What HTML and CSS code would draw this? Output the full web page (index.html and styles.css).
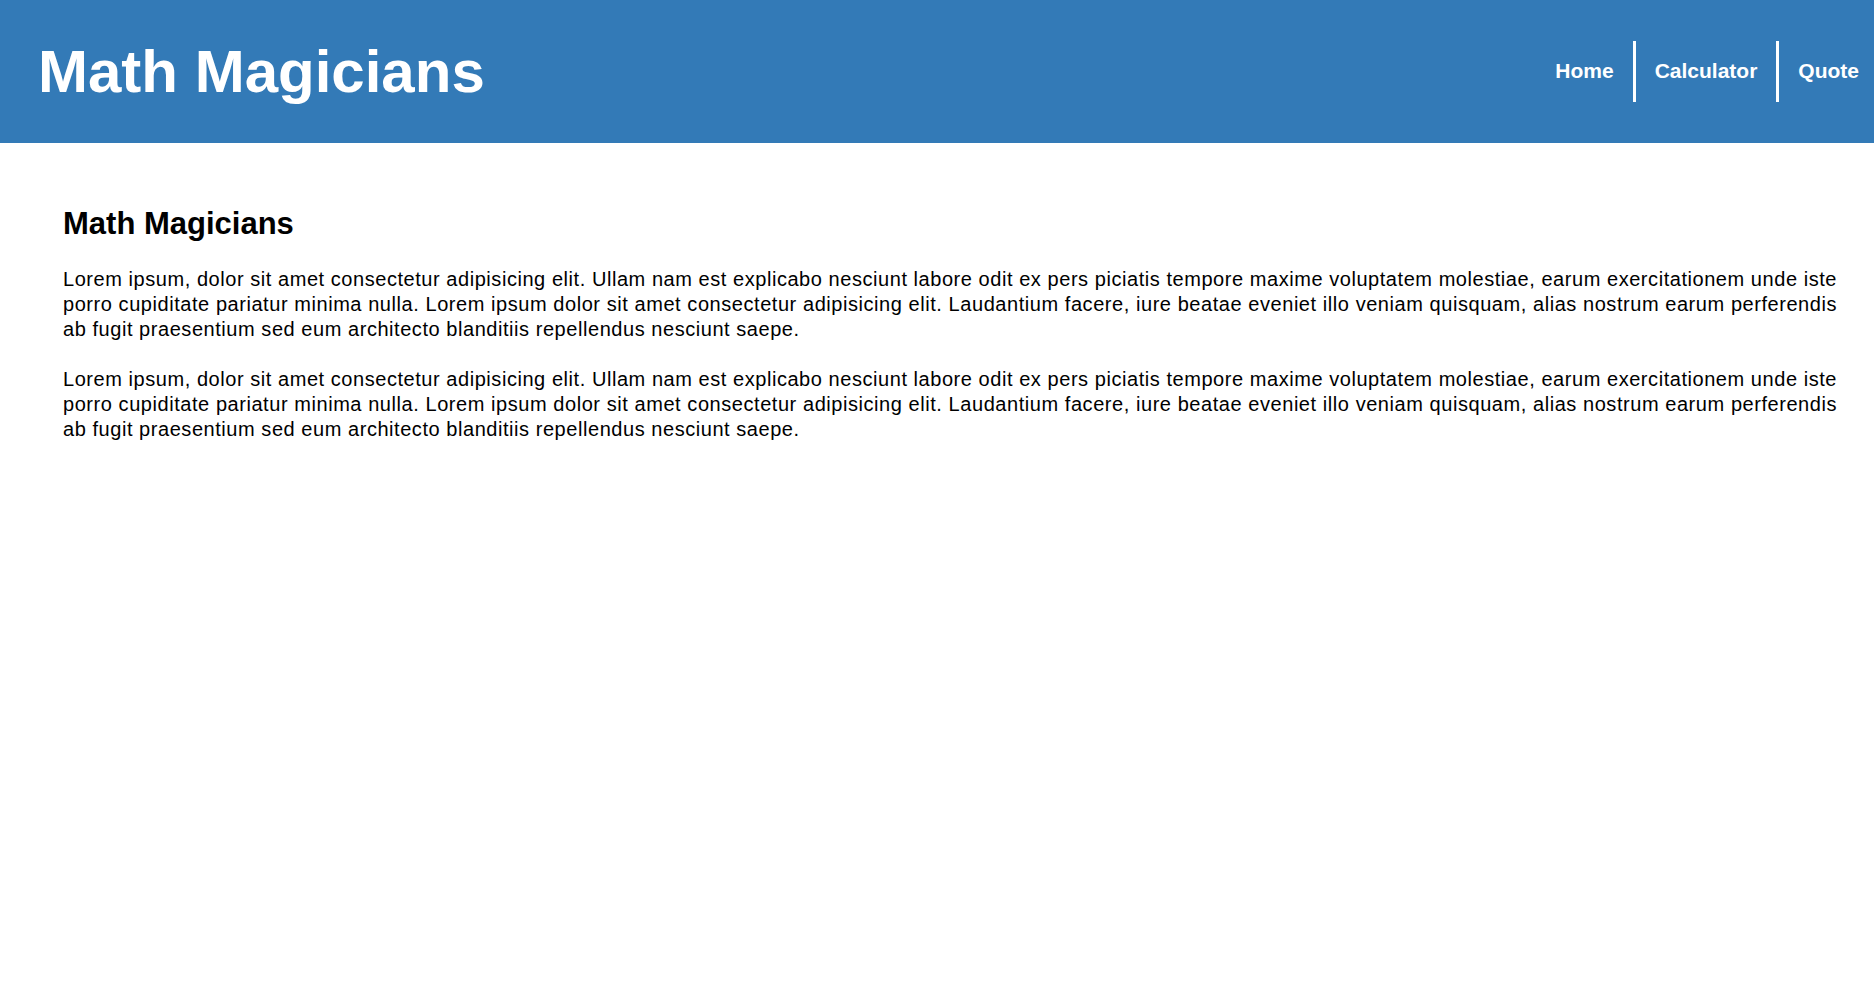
FILE: index.html
```html
<!DOCTYPE html>
<html lang="en">
<head>
<meta charset="utf-8">
<title>Math Magicians</title>
<link rel="stylesheet" href="styles.css">
</head>
<body>
<header class="site-header">
  <h1 class="logo">Math Magicians</h1>
  <nav class="nav">
    <a class="nav-link" href="#">Home</a>
    <a class="nav-link nav-sep" href="#">Calculator</a>
    <a class="nav-link nav-sep nav-last" href="#">Quote</a>
  </nav>
</header>
<main class="content">
  <h2 class="title">Math Magicians</h2>
  <p class="text">Lorem ipsum, dolor sit amet consectetur adipisicing elit. Ullam nam est explicabo nesciunt labore odit ex pers piciatis tempore maxime voluptatem molestiae, earum exercitationem unde iste porro cupiditate pariatur minima nulla. Lorem ipsum dolor sit amet consectetur adipisicing elit. Laudantium facere, iure beatae eveniet illo veniam quisquam, alias nostrum earum perferendis ab fugit praesentium sed eum architecto blanditiis repellendus nesciunt saepe.</p>
  <p class="text">Lorem ipsum, dolor sit amet consectetur adipisicing elit. Ullam nam est explicabo nesciunt labore odit ex pers piciatis tempore maxime voluptatem molestiae, earum exercitationem unde iste porro cupiditate pariatur minima nulla. Lorem ipsum dolor sit amet consectetur adipisicing elit. Laudantium facere, iure beatae eveniet illo veniam quisquam, alias nostrum earum perferendis ab fugit praesentium sed eum architecto blanditiis repellendus nesciunt saepe.</p>
</main>
</body>
</html>
```

FILE: styles.css
```css
* {
  box-sizing: border-box;
}

body {
  margin: 0;
  font-family: "Liberation Sans", Arial, sans-serif;
  color: #000;
  background: #fff;
}

.site-header {
  height: 143px;
  background: #337ab7;
  display: flex;
  align-items: center;
  justify-content: space-between;
  padding: 0 0 0 38px;
}

.logo {
  margin: 0;
  font-size: 60px;
  font-weight: bold;
  color: #fff;
  line-height: 1;
}

.nav {
  display: flex;
  align-items: center;
}

.nav-link {
  display: flex;
  align-items: center;
  height: 61px;
  padding: 0 19px 2px;
  color: #fff;
  font-size: 21px;
  font-weight: bold;
  text-decoration: none;
}

.nav-sep {
  border-left: 3px solid #fff;
}

.nav-last {
  padding-right: 15px;
}

.content {
  padding: 63px 37px 0 63px;
}

.title {
  margin: 0 0 25px;
  font-size: 31px;
  font-weight: bold;
  line-height: 1.15;
}

.text {
  margin: 0 0 25px;
  font-size: 20px;
  letter-spacing: 0.55px;
  line-height: 25px;
  text-align: justify;
}
```
